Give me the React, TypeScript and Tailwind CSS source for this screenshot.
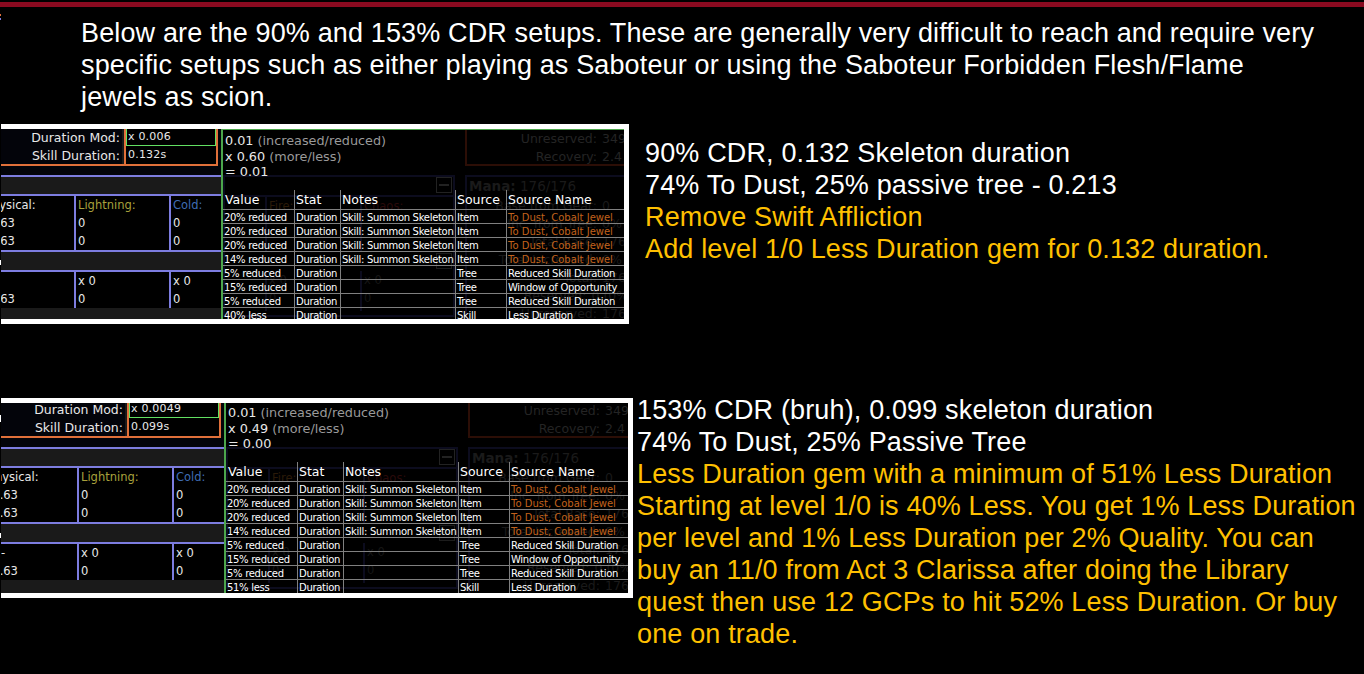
import React from 'react';

interface StatRow {
  value: string;
  notes: string;
  source: string;
  name: string;
}

const JEWEL = 'To Dust, Cobalt Jewel';
const SKEL = 'Skill: Summon Skeleton';

const buildRows = (less: string): StatRow[] => [
  { value: '20% reduced', notes: SKEL, source: 'Item', name: JEWEL },
  { value: '20% reduced', notes: SKEL, source: 'Item', name: JEWEL },
  { value: '20% reduced', notes: SKEL, source: 'Item', name: JEWEL },
  { value: '14% reduced', notes: SKEL, source: 'Item', name: JEWEL },
  { value: '5% reduced', notes: '', source: 'Tree', name: 'Reduced Skill Duration' },
  { value: '15% reduced', notes: '', source: 'Tree', name: 'Window of Opportunity' },
  { value: '5% reduced', notes: '', source: 'Tree', name: 'Reduced Skill Duration' },
  { value: less, notes: '', source: 'Skill', name: 'Less Duration' },
];

const Ghost = () => (
  <>
    {/* the calc panel that shows through the transparent table */}
    <div className="absolute left-0 top-[46px] w-[232px] h-[142px] border-2 border-[#0c0c1e] text-[11.5px]">
      <div className="h-[18px] flex justify-end pr-[1px]">
        <div className="w-[16px] h-[16px] border border-[#222222] flex items-center justify-center">
          <div className="w-[10px] h-[2px] bg-[#222222]" />
        </div>
      </div>
      <div className="h-[56px] flex border-t-2 border-[#0c0c1e] leading-[18px]">
        <div className="w-[40px]" />
        <div className="w-[95px] border-l-2 border-[#0c0c1e] pl-[2px] text-[#2a1a08]">Fire:</div>
        <div className="border-l-2 border-[#0c0c1e] pl-[2px] text-[#2a0a0a]">Chaos:</div>
      </div>
      <div className="h-[20px] flex justify-end pr-[1px] items-center">
        <div className="w-[16px] h-[16px] border border-[#1c1c1c]" />
      </div>
      <div className="h-[40px] flex text-[#161616] leading-[18px]">
        <div className="w-[40px]" />
        <div className="w-[95px] border-l-2 border-[#0c0c1e] pl-[2px]">
          <div>x 0</div>
          <div>0</div>
        </div>
        <div className="border-l-2 border-[#0c0c1e] pl-[2px]">
          <div>x 0</div>
          <div>0</div>
        </div>
      </div>
    </div>
    <div className="absolute left-[242px] -top-[1px] w-[170px] h-[38px] border-2 border-[#2c0e06] text-[#242424] leading-[18px] text-[12.5px]">
      <div className="flex">
        <span className="w-[130px] text-right">Unreserved:</span>
        <span className="ml-[5px]">349</span>
      </div>
      <div className="flex">
        <span className="w-[130px] text-right">Recovery:</span>
        <span className="ml-[5px]">2.4</span>
      </div>
    </div>
    <div className="absolute left-[242px] top-[46px] w-[170px] h-[150px] border-2 border-[#0c0c1e] text-[#1a1a1a] leading-[18px] text-[12.5px]">
      <div className="pl-[2px] h-[20px] text-[13.5px]">
        <span className="font-bold">Mana:</span> 176/176
      </div>
      {[
        ['Base from Gear:', '0'],
        ['Inc. from Tree:', '0%'],
        ['Total Base:', '176'],
        ['Total Increased:', '0%'],
        ['Total:', '176'],
        ['Reserved:', '0 (0%)'],
        ['Unreserved:', '176'],
      ].map(([label, val]) => (
        <div key={label} className="flex whitespace-nowrap">
          <span className="w-[130px] text-right">{label}</span>
          <span className="ml-[5px]">{val}</span>
        </div>
      ))}
    </div>
  </>
);

interface PanelProps {
  className: string;
  shift: string;
  leftWidth: string;
  durationMod: string;
  skillDuration: string;
  physOffset: string;
  lessMult: string;
  result: string;
  less: string;
  dash?: boolean;
}

const Panel: React.FC<PanelProps> = ({ className, shift, leftWidth, durationMod, skillDuration, physOffset, lessMult, result, less, dash }) => (
  <div className={`h-[200px] shrink-0 border-y-[5px] border-r-[5px] border-white overflow-hidden bg-black ml-[1px] font-['DejaVu_Sans',sans-serif] text-[11.5px] text-[#e8e8e8] ${className}`}>
    <div className={`flex h-[196px] whitespace-nowrap ${shift}`}>
      <div className={`${leftWidth} shrink-0 flex flex-col bg-[#03040a]`}>
        <div className="h-[37px] shrink-0 flex pr-[3px] text-[12.5px]">
          <div className="flex-1 flex border-b-2 border-[#e0703a]">
            <div className="flex-1 text-right pr-[2px] leading-[18px]">
              <div>Duration Mod:</div>
              <div>Skill Duration:</div>
            </div>
            <div className="w-[2px] bg-[#1a1a1a]" />
          </div>
          <div className="w-[94px] border-l-2 border-r-2 border-b-2 border-[#e0703a] bg-black text-[11px] tracking-[0.2px]">
            <div className="h-[17px] border border-t-0 border-[#62e062] pl-[1px] leading-[15px]">{durationMod}</div>
            <div className="pl-[2px] leading-[18px]">{skillDuration}</div>
          </div>
        </div>
        <div className="h-[9px] shrink-0" />
        <div className="h-[17px] shrink-0 border-y-2 border-[#7d7de0] bg-[#1a1a1a] box-content" />
        <div className="h-[54px] shrink-0 flex bg-black leading-[18px]">
          <div className="flex-1 overflow-hidden">
            <div className={physOffset}>
              <div className="ml-[4px]">Physical:</div>
              <div className="ml-[1px]">11.63</div>
              <div className="ml-[1px]">11.63</div>
            </div>
          </div>
          <div className="w-[95px] border-l-2 border-[#7d7de0] pl-[2px]">
            <div className="text-[#a8a03c]">Lightning:</div>
            <div>0</div>
            <div>0</div>
          </div>
          <div className="w-[52px] border-l-2 border-[#7d7de0] pl-[2px]">
            <div className="text-[#3f6cb4]">Cold:</div>
            <div>0</div>
            <div>0</div>
          </div>
        </div>
        <div className="h-[18px] shrink-0 border-y-2 border-[#7d7de0] bg-[#1a1a1a] box-content" />
        <div className="h-[36px] shrink-0 flex bg-black leading-[18px]">
          <div className="flex-1 overflow-hidden">
            <div className={physOffset}>
              <div>{dash ? <span className="ml-[17px]">-</span> : '\u00a0'}</div>
              <div className="ml-[1px]">11.63</div>
            </div>
          </div>
          <div className="w-[95px] border-l-2 border-[#7d7de0] pl-[2px]">
            <div>x 0</div>
            <div>0</div>
          </div>
          <div className="w-[52px] border-l-2 border-[#7d7de0] pl-[2px]">
            <div>x 0</div>
            <div>0</div>
          </div>
        </div>
        <div className="flex-1 bg-[#1a1a1a]" />
      </div>

      <div className="flex-1 relative border-l-2 border-[#4ca64c] overflow-hidden">
        <Ghost />
        <div className="relative">
          <div className="h-px bg-[#4ca64c]" />
          <div className="h-[60px] pt-[3px] pl-[2px] text-[12.8px] leading-[15.5px] text-[#e8e8e8]">
            <div>0.01 <span className="text-[#9a9a9a]">(increased/reduced)</span></div>
            <div>x {lessMult} <span className="text-[#9a9a9a]">(more/less)</span></div>
            <div>= {result}</div>
          </div>
          <div className="flex h-[20px] border-b border-[#808080] text-[12.5px] leading-[20px] text-white">
            <div className="w-[71px] pl-[2px]">Value</div>
            <div className="w-[46px] border-l border-[#808080] pl-[1px]">Stat</div>
            <div className="w-[115px] border-l border-[#808080] pl-[1px]">Notes</div>
            <div className="w-[51px] border-l border-[#808080] pl-[1px]">Source</div>
            <div className="flex-1 border-l border-[#808080] pl-[1px]">Source Name</div>
          </div>
          {buildRows(less).map((row, i) => (
            <div key={i} className="flex h-[14px] border-b border-[#808080] text-[10px] tracking-[-0.3px] leading-[15px] text-white">
              <div className="w-[71px] pl-[1px]">{row.value}</div>
              <div className="w-[46px] border-l border-[#808080] pl-[1px]">Duration</div>
              <div className="w-[115px] border-l border-[#808080] pl-[1px]">{row.notes}</div>
              <div className="w-[51px] border-l border-[#808080] pl-[1px]">{row.source}</div>
              <div className={`flex-1 border-l border-[#808080] pl-[1px] ${row.name === JEWEL ? 'text-[#c2621c] tracking-[0px]' : ''}`}>{row.name}</div>
            </div>
          ))}
        </div>
      </div>
    </div>
  </div>
);

const Notes: React.FC<{ className: string; white: string[]; yellow: string[] }> = ({ className, white, yellow }) => (
  <div className={`whitespace-nowrap ${className}`}>
    {white.map((line) => (
      <div key={line} className="text-white">{line}</div>
    ))}
    {yellow.map((line) => (
      <div key={line} className="text-[#ffc000]">{line}</div>
    ))}
  </div>
);

export default function App() {
  return (
    <div className="relative w-[1364px] h-[674px] bg-black overflow-hidden pt-[2px] font-['Liberation_Sans',sans-serif] text-[27px] tracking-[0.14px] leading-[32px]">
      <div className="h-[5px] bg-[#8a0a20]" />
      {/* leftover pixels along the crop's left edge */}
      <div className="absolute left-0 top-[14px] w-px h-[2px] bg-[#e0703a]" />
      <div className="absolute left-0 top-[18px] w-px h-[2px] bg-[#7d7de0]" />
      <div className="absolute left-0 top-[260px] w-px h-[5px] bg-white" />
      <div className="absolute left-0 top-[415px] w-px h-[7px] bg-white" />
      <div className="absolute left-0 top-[533px] w-px h-[5px] bg-white" />
      <div className="pl-[81px] pt-[10px] text-white whitespace-nowrap">
        <div>Below are the 90% and 153% CDR setups. These are generally very difficult to reach and require very</div>
        <div>specific setups such as either playing as Saboteur or using the Saboteur Forbidden Flesh/Flame</div>
        <div>jewels as scion.</div>
      </div>
      <div className="flex items-start mt-[11px] tracking-normal">
        <Panel
          className="w-[628px]"
          shift=""
          leftWidth="w-[220px]"
          durationMod="x 0.006"
          skillDuration="0.132s"
          physOffset="-ml-[20px]"
          lessMult="0.60"
          result="0.01"
          less="40% less"
        />
        <Notes
          className="ml-[16px] mt-[13px] tracking-[0.15px]"
          white={['90% CDR, 0.132 Skeleton duration', '74% To Dust, 25% passive tree - 0.213']}
          yellow={['Remove Swift Affliction', 'Add level 1/0 Less Duration gem for 0.132 duration.']}
        />
      </div>
      <div className="flex items-start mt-[70px] tracking-normal">
        <div className="pt-[4px]">
          <Panel
            className="w-[632px]"
            shift="-mt-[2px]"
            leftWidth="w-[223px]"
            durationMod="x 0.0049"
            skillDuration="0.099s"
            physOffset="-ml-[17px]"
            lessMult="0.49"
            result="0.00"
            less="51% less"
            dash
          />
        </div>
        <Notes
          className="ml-[4px] tracking-[0.15px]"
          white={['153% CDR (bruh), 0.099 skeleton duration', '74% To Dust, 25% Passive Tree']}
          yellow={[
            'Less Duration gem with a minimum of 51% Less Duration',
            'Starting at level 1/0 is 40% Less. You get 1% Less Duration',
            'per level and 1% Less Duration per 2% Quality. You can',
            'buy an 11/0 from Act 3 Clarissa after doing the Library',
            'quest then use 12 GCPs to hit 52% Less Duration. Or buy',
            'one on trade.',
          ]}
        />
      </div>
    </div>
  );
}
